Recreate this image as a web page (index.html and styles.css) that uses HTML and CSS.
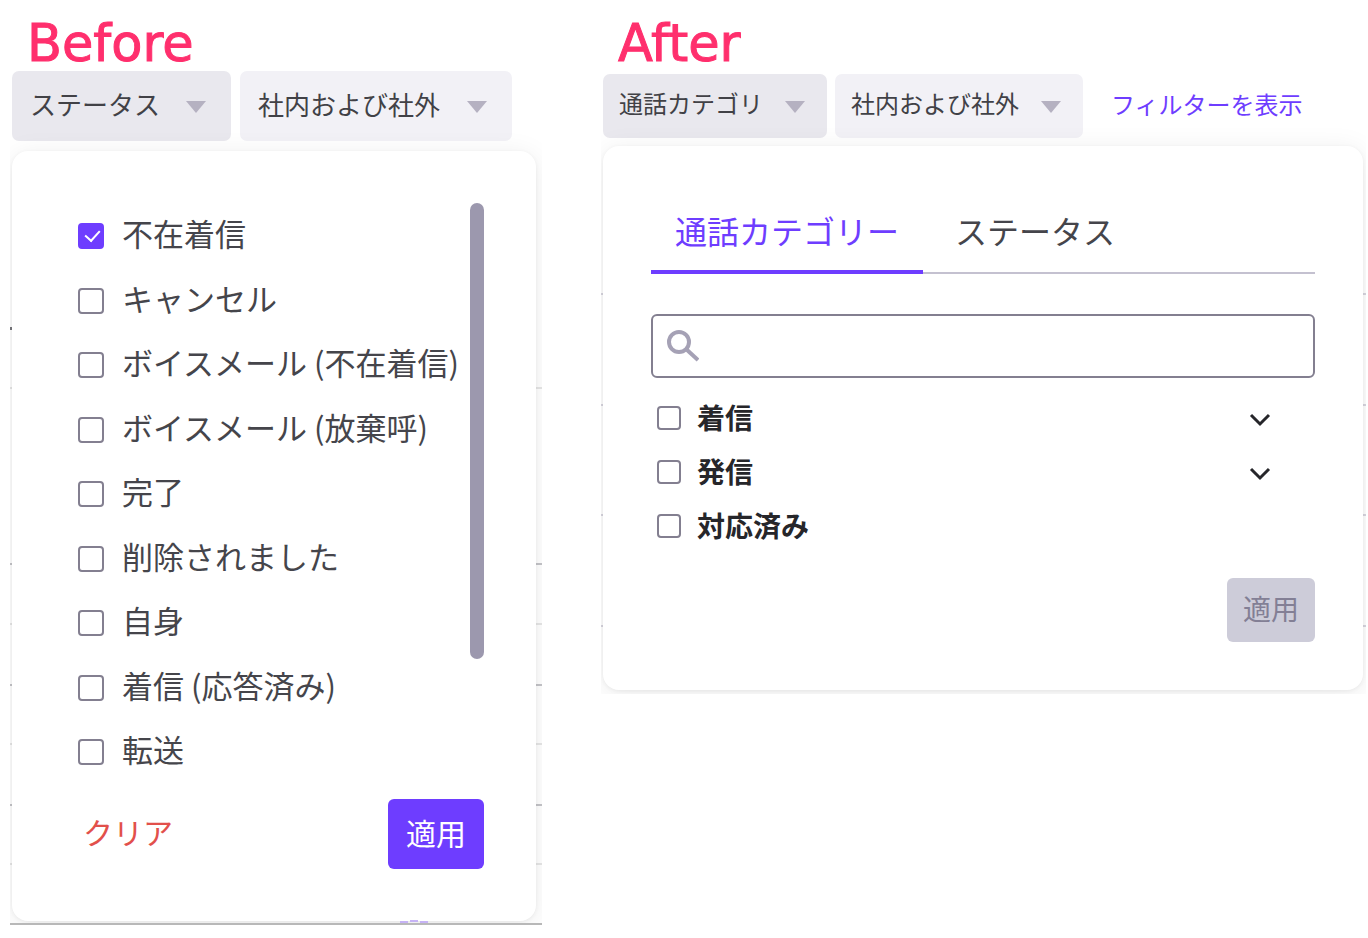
FILE: index.html
```
<!DOCTYPE html>
<html lang="ja">
<head>
  <meta charset="UTF-8">
  <meta name="viewport" content="width=device-width, initial-scale=1.0">
  <title>Before / After</title>
  <link rel="stylesheet" href="styles.css">
</head>
<body>
  <main class="compare">
    <section class="before">
      <h2 class="title">Before</h2>
      <div class="capture">
        <div class="filters">
          <div class="filter-wrap">
            <button type="button" class="filter open" aria-expanded="true">ステータス</button>
            <svg class="arrow" viewBox="0 0 20 12"><path d="M0 0h20L10 12z"/></svg>
          </div>
          <div class="filter-wrap">
            <select class="filter" aria-label="社内および社外">
              <option>社内および社外</option>
            </select>
            <svg class="arrow" viewBox="0 0 20 12"><path d="M0 0h20L10 12z"/></svg>
          </div>
        </div>

        <div class="panel">
          <div class="scroll-area">
            <div class="status-list">
              <label class="check"><input type="checkbox" checked><span>不在着信</span></label>
              <label class="check"><input type="checkbox"><span>キャンセル</span></label>
              <label class="check"><input type="checkbox"><span>ボイスメール (不在着信)</span></label>
              <label class="check"><input type="checkbox"><span>ボイスメール (放棄呼)</span></label>
              <label class="check"><input type="checkbox"><span>完了</span></label>
              <label class="check"><input type="checkbox"><span>削除されました</span></label>
              <label class="check"><input type="checkbox"><span>自身</span></label>
              <label class="check"><input type="checkbox"><span>着信 (応答済み)</span></label>
              <label class="check"><input type="checkbox"><span>転送</span></label>
            </div>
            <div class="scrollbar"></div>
          </div>
          <div class="actions">
            <button type="button" class="clear">クリア</button>
            <button type="button" class="apply">適用</button>
          </div>
        </div>
        <svg class="fragment" viewBox="0 0 28 3"><path d="M0 2h8M10 1h8M20 2h8"/></svg>
      </div>
    </section>

    <section class="after">
      <h2 class="title">After</h2>
      <div class="capture">
        <div class="filters">
          <div class="filter-wrap">
            <button type="button" class="filter open" aria-expanded="true">通話カテゴリ</button>
            <svg class="arrow" viewBox="0 0 20 12"><path d="M0 0h20L10 12z"/></svg>
          </div>
          <div class="filter-wrap">
            <select class="filter" aria-label="社内および社外">
              <option>社内および社外</option>
            </select>
            <svg class="arrow" viewBox="0 0 20 12"><path d="M0 0h20L10 12z"/></svg>
          </div>
          <a class="show-filters" href="#">フィルターを表示</a>
        </div>

        <div class="panel">
          <div class="tabs" role="tablist">
            <button type="button" class="tab active" role="tab" aria-selected="true">通話カテゴリー</button>
            <button type="button" class="tab" role="tab" aria-selected="false">ステータス</button>
          </div>
          <div class="search">
            <svg class="search-icon" viewBox="0 0 32 32"><circle cx="12" cy="12" r="10"/><path d="M19 19L31 30"/></svg>
            <input type="search" aria-label="検索">
          </div>
          <div class="category-list">
            <div class="category">
              <label class="check"><input type="checkbox"><span>着信</span></label>
              <button type="button" class="expand" aria-label="着信">
                <svg class="chevron" viewBox="0 0 22 14"><path d="M2 2l9 9 9-9"/></svg>
              </button>
            </div>
            <div class="category">
              <label class="check"><input type="checkbox"><span>発信</span></label>
              <button type="button" class="expand" aria-label="発信">
                <svg class="chevron" viewBox="0 0 22 14"><path d="M2 2l9 9 9-9"/></svg>
              </button>
            </div>
            <div class="category">
              <label class="check"><input type="checkbox"><span>対応済み</span></label>
            </div>
          </div>
          <div class="actions">
            <button type="button" class="apply" disabled>適用</button>
          </div>
        </div>
      </div>
    </section>
  </main>
</body>
</html>
```
FILE: styles.css
```
* {
  box-sizing: border-box;
}

body {
  margin: 0;
  background: #fff;
  color: #45454b;
  font-family: "Noto Sans CJK JP", sans-serif;
}

button, input, select {
  margin: 0;
  padding: 0;
  border: none;
  background: none;
  color: inherit;
  font: inherit;
  cursor: pointer;
}

.compare {
  display: grid;
  grid-template-columns: 532fr 765fr;
  align-items: start;
  gap: 59px;
  padding: 0 2px 0 10px;
}

.title {
  margin: 0;
  padding: 16px 0 0 17px;
  color: #ff2f6d;
  font-family: "DejaVu Sans", sans-serif;
  font-size: 51px;
  font-weight: normal;
  line-height: 55px;
  -webkit-text-stroke: 1px #ff2f6d;
}

.after .title {
  padding-bottom: 3px;
}

/* table rows that show at both sides of the panel */
.capture {
  position: relative;
  overflow: hidden;
  padding: 0 6px 4px 2px;
}

.before .capture {
  border-bottom: 2px solid #b8b8b8;
  padding-bottom: 2px;
  background-image:
    linear-gradient(#e6e6e6, #e6e6e6),
    linear-gradient(#c4c4c8, #c4c4c8),
    linear-gradient(#e6e6e6, #e6e6e6),
    linear-gradient(#c4c4c8, #c4c4c8),
    linear-gradient(#e6e6e6, #e6e6e6),
    linear-gradient(#c4c4c8, #c4c4c8),
    linear-gradient(#e6e6e6, #e6e6e6),
    linear-gradient(#77777c, #77777c);
  background-size: 100% 2px, 100% 2px, 100% 2px, 100% 2px, 100% 2px, 100% 2px, 100% 2px, 2px 3px;
  background-position: 0 316px, 0 492px, 0 552px, 0 613px, 0 672px, 0 733px, 0 792px, 0 256px;
  background-repeat: no-repeat;
}

.after .capture {
  padding-right: 3px;
  background-image:
    linear-gradient(#d8d6df, #d8d6df),
    linear-gradient(#d8d6df, #d8d6df),
    linear-gradient(#d8d6df, #d8d6df),
    linear-gradient(#d8d6df, #d8d6df);
  background-size: 100% 2px;
  background-position: 0 219px, 0 330px, 0 440px, 0 551px;
  background-repeat: no-repeat;
}

.filters {
  display: flex;
  align-items: center;
  gap: 8px;
  white-space: nowrap;
}

.filter-wrap {
  position: relative;
}

.filter {
  display: block;
  appearance: none;
  height: 64px;
  padding: 0 64px 6px 16px;
  border-radius: 7px;
  background: #f2f1f6;
  color: #414146;
  font-size: 24px;
  line-height: 36px;
}

.filter.open {
  background: #e9e8ee;
}

.arrow {
  position: absolute;
  top: 27px;
  right: 22px;
  width: 20px;
  height: 12px;
  fill: #b5b1c1;
  pointer-events: none;
}

.before .filters {
  gap: 9px;
}

.before .filter {
  height: 70px;
  padding: 0 71px 4px 18px;
  font-size: 26px;
}

.before .arrow {
  top: 30px;
  right: 25px;
}

.show-filters {
  margin-left: 20px;
  padding-bottom: 4px;
  color: #6e3dff;
  font-size: 24px;
  line-height: 36px;
  text-decoration: none;
}

.panel {
  position: relative;
  border-radius: 16px;
  background: #fff;
  box-shadow: 0 4px 28px rgba(0, 0, 0, 0.08), 0 1px 4px rgba(0, 0, 0, 0.06);
}

.before .panel {
  margin-top: 10px;
  padding: 52px 52px 52px 66px;
}

.after .panel {
  margin-top: 8px;
  padding: 60px 48px 48px;
}

.scroll-area {
  display: flex;
  justify-content: space-between;
}

.status-list {
  display: flex;
  flex-direction: column;
  justify-content: space-between;
  height: 567px;
  padding-top: 15px;
}

.scrollbar {
  width: 14px;
  height: 456px;
  border-radius: 7px;
  background: #9c98ae;
}

.check {
  display: flex;
  align-items: center;
  gap: 18px;
  height: 36px;
  font-size: 31px;
  line-height: 36px;
  white-space: nowrap;
  cursor: pointer;
}

.check span {
  padding-bottom: 6px;
}

.check input {
  appearance: none;
  flex: none;
  width: 26px;
  height: 26px;
  border: 2px solid #837f90;
  border-radius: 4px;
}

.check input:checked {
  border-color: #6e3dff;
  background: #6e3dff;
}

.check input:checked::after {
  content: "";
  display: block;
  width: 7px;
  height: 12px;
  margin: 2px 0 0 8px;
  border: solid #fff;
  border-width: 0 2px 2px 0;
  transform: rotate(42deg);
}

.actions {
  display: flex;
  align-items: center;
  justify-content: space-between;
  margin-top: 29px;
  font-size: 30px;
}

.clear {
  padding: 0 0 6px 5px;
  color: #e2504b;
}

.apply {
  height: 70px;
  padding: 0 18px 4px;
  border-radius: 6px;
  background: #6e3dff;
  color: #fff;
}

.apply:disabled {
  height: 64px;
  padding: 0 16px 4px;
  background: #cdccd9;
  color: #837f95;
  cursor: default;
}

/* top of a link cut off under the panel */
.fragment {
  position: absolute;
  bottom: 0;
  left: 390px;
  width: 28px;
  height: 3px;
  fill: none;
  stroke: #c6b3f5;
  stroke-width: 2;
}

.tabs {
  display: flex;
  gap: 8px;
  box-shadow: inset 0 -2px #c4c1d0;
}

.tab {
  padding: 0 24px 16px;
  border-bottom: 4px solid transparent;
  font-size: 32px;
  line-height: 48px;
}

.tab.active {
  border-color: #6e3dff;
  color: #6e3dff;
}

.search {
  display: flex;
  align-items: center;
  gap: 16px;
  height: 64px;
  margin-top: 40px;
  padding: 0 14px;
  border: 2px solid #837f90;
  border-radius: 6px;
}

.search input {
  flex: 1;
  outline: none;
  font-size: 28px;
  cursor: text;
}

.search-icon {
  width: 32px;
  height: 32px;
  fill: none;
  stroke: #a5a1b5;
  stroke-width: 4;
}

.category-list {
  padding: 13px 44px 0 6px;
}

.category {
  display: flex;
  align-items: center;
  justify-content: space-between;
  height: 54px;
}

.category .check {
  gap: 16px;
  color: #26262a;
  font-size: 28px;
  font-weight: bold;
}

.category .check span {
  padding-bottom: 3px;
}

.category .check input {
  width: 24px;
  height: 24px;
}

.expand {
  padding-top: 3px;
}

.chevron {
  display: block;
  width: 22px;
  height: 14px;
  fill: none;
  stroke: #26262a;
  stroke-width: 3;
}

.after .actions {
  justify-content: flex-end;
  margin-top: 25px;
  font-size: 28px;
}
```
